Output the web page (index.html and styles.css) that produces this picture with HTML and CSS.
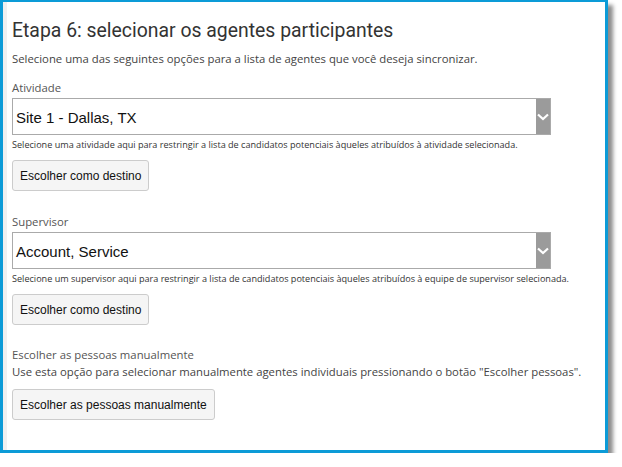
FILE: index.html
```html
<!DOCTYPE html>
<html lang="pt">
<head>
    <meta charset="UTF-8">
    <title>Etapa 6</title>
    <link rel="stylesheet" href="styles.css">
</head>
<body>
    <div class="window">
        <div class="content">
            <h1>Etapa 6: selecionar os agentes participantes</h1>
            <p class="intro">Selecione uma das seguintes opções para a lista de agentes que você deseja sincronizar.</p>

            <div class="field">
                <label>Atividade</label>
                <div class="select">
                    <span class="value">Site 1 - Dallas, TX</span>
                    <span class="arrow">
                        <svg width="12" height="8" viewBox="0 0 12 8"><path d="M1 1.5 L6 6 L11 1.5" fill="none" stroke="#fff" stroke-width="2.2"/></svg>
                    </span>
                </div>
                <p class="help">Selecione uma atividade aqui para restringir a lista de candidatos potenciais àqueles atribuídos à atividade selecionada.</p>
                <button class="btn">Escolher como destino</button>
            </div>

            <div class="field">
                <label>Supervisor</label>
                <div class="select">
                    <span class="value">Account, Service</span>
                    <span class="arrow">
                        <svg width="12" height="8" viewBox="0 0 12 8"><path d="M1 1.5 L6 6 L11 1.5" fill="none" stroke="#fff" stroke-width="2.2"/></svg>
                    </span>
                </div>
                <p class="help">Selecione um supervisor aqui para restringir a lista de candidatos potenciais àqueles atribuídos à equipe de supervisor selecionada.</p>
                <button class="btn">Escolher como destino</button>
            </div>

            <div class="field">
                <label class="tight">Escolher as pessoas manualmente</label>
                <p class="intro manual">Use esta opção para selecionar manualmente agentes individuais pressionando o botão "Escolher pessoas".</p>
                <button class="btn">Escolher as pessoas manualmente</button>
            </div>
        </div>
    </div>
</body>
</html>
```

FILE: styles.css
```css
body {
    margin: 0;
    background-color: white;
    font-family: "Open Sans", sans-serif;
}
.window {
    width: 602px;
    height: 448px;
    border: 3px solid #0c9bd7;
    border-top-width: 2px;
    box-shadow: 5px 5px 4px rgba(0, 0, 0, 0.45);
    background-color: white;
}
.content {
    height: 100%;
    box-sizing: border-box;
    border-left: 4px solid #f0f0f0;
    padding: 17px 0 0 5px;
}
h1 {
    font-family: Roboto, sans-serif;
    font-weight: normal;
    font-size: 19.4px;
    line-height: 24px;
    color: #333;
    margin: 0 0 8px 0;
}
.intro {
    font-size: 11.33px;
    line-height: 16px;
    color: #444;
    margin: 0 0 13px 0;
}
.intro.manual {
    margin-bottom: 9px;
}
label {
    display: block;
    font-size: 11.33px;
    line-height: 16px;
    color: #555;
    margin-bottom: 2px;
}
label.tight {
    margin-bottom: 1px;
}
.select {
    width: 539px;
    height: 37px;
    box-sizing: border-box;
    border: 1px solid #aaa;
    display: flex;
    align-items: center;
}
.value {
    flex-grow: 1;
    font-family: "Liberation Sans", Arial, sans-serif;
    font-size: 15px;
    color: #111;
    padding: 1px 0 0 3px;
}
.arrow {
    width: 14px;
    height: 100%;
    background-color: #9b9b9b;
    display: flex;
    align-items: center;
    justify-content: center;
}
.help {
    font-size: 9.1px;
    line-height: 12px;
    color: #333;
    margin: 4px 0 9px 0;
}
.btn {
    display: block;
    font-family: "Liberation Sans", Arial, sans-serif;
    font-size: 12px;
    color: #111;
    background-color: #f5f5f5;
    border: 1px solid #ccc;
    border-radius: 3px;
    padding: 0 7px;
    height: 31px;
    margin-bottom: 23px;
}
.field:nth-of-type(2) .btn {
    margin-bottom: 22px;
}
```
